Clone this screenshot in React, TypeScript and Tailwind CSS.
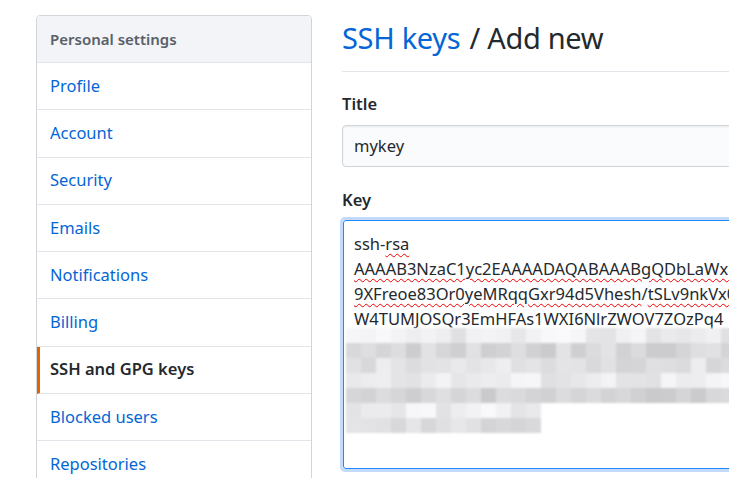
import React from "react";

const items = [
  "Profile",
  "Account",
  "Security",
  "Emails",
  "Notifications",
  "Billing",
  "SSH and GPG keys",
  "Blocked users",
  "Repositories",
];

function rand(seed: number) {
  let s = seed;
  return () => {
    s = (s * 9301 + 49297) % 233280;
    return s / 233280;
  };
}

const Blur = () => {
  const r = rand(42);
  const rows = [
    { y: 0, cols: 26, base: 236 },
    { y: 15, cols: 26, base: 215 },
    { y: 30, cols: 26, base: 225 },
    { y: 45, cols: 26, base: 236 },
    { y: 60, cols: 26, base: 212 },
    { y: 75, cols: 13, base: 238 },
    { y: 90, cols: 13, base: 222 },
  ];
  const cells: React.ReactNode[] = [];
  rows.forEach((row, ri) => {
    for (let c = 0; c < row.cols; c++) {
      const v = Math.round(row.base + (r() - 0.5) * 26);
      const g = Math.max(180, Math.min(250, v));
      cells.push(
        <div
          key={`${ri}-${c}`}
          className="absolute"
          style={{
            left: c * 15,
            top: row.y,
            width: 15,
            height: 15,
            background: `rgb(${g},${g},${g + 2})`,
          }}
        />
      );
    }
  });
  return (
    <div className="relative h-[105px] w-[400px] blur-[0.8px]">{cells}</div>
  );
};

export default function App() {
  const font = { fontFamily: '"Noto Sans", "Segoe UI", sans-serif' };
  const wavy =
    "underline decoration-wavy decoration-[#e00] decoration-1 underline-offset-[3px]";
  return (
    <div
      className="w-[729px] h-[478px] overflow-hidden bg-white text-[#24292e]"
      style={font}
    >
      <div className="flex pl-[36px] pt-[15px] gap-[30px]">
        <nav className="w-[276px] shrink-0 border border-[#d1d5da] rounded-t-[4px] h-[480px] overflow-hidden">
          <div className="h-[47px] bg-[#f3f4f7] border-b border-[#e1e4e8] flex items-center px-[13px] text-[15px] font-semibold text-[#586069]">
            Personal settings
          </div>
          {items.map((it) => {
            const active = it === "SSH and GPG keys";
            return (
              <div
                key={it}
                className={
                  active
                    ? "h-[47.25px] border-b border-[#e1e4e8] flex items-center pl-[10px] text-[16.5px] font-semibold text-[#24292e] border-l-[3px] border-l-[#e36209]"
                    : "h-[47.25px] border-b border-[#e1e4e8] flex items-center pl-[13px] text-[16.5px] text-[#0366d6]"
                }
              >
                {it}
              </div>
            );
          })}
        </nav>
        <main className="flex-1 min-w-[500px]">
          <h1 className="h-[57px] border-b border-[#e1e4e8] flex items-center text-[29px] tracking-[-0.3px] leading-none pb-[11px]">
            <span className="text-[#0366d6]">SSH keys</span>
            <span className="ml-[9px]">/ Add new</span>
          </h1>
          <div className="mt-[20px] text-[16.5px] font-semibold leading-[24px]">
            Title
          </div>
          <div className="mt-[9px] h-[42px] w-[500px] rounded-[4px] border border-[#d1d5da] bg-[#fafbfc] flex items-center px-[11px] text-[16.5px] shadow-[inset_0_1px_2px_rgba(27,31,35,0.075)]">
            mykey
          </div>
          <div className="mt-[21px] text-[16.5px] font-semibold leading-[24px]">
            Key
          </div>
          <div className="mt-[5px] ml-[-2px] w-[500px] h-[255px] rounded-[5px] border-[3px] border-[#c3dbf8]">
            <div className="h-full rounded-[3px] border border-[#2188ff] bg-white pl-[10px] pt-[10px] text-[16.5px] leading-[25px] whitespace-nowrap overflow-hidden">
              <div>
                ssh-<span className={wavy}>rsa</span>
              </div>
              <div className={wavy}>AAAAB3NzaC1yc2EAAAADAQABAAABgQDbLaWxQ7</div>
              <div>
                <span className={wavy}>9XFreoe83Or0yeMRqqGxr94d5Vhesh</span>/
                <span className={wavy}>tSLv9nkVx0Lk</span>
              </div>
              <div>W4TUMJOSQr3EmHFAs1WXI6NlrZWOV7ZOzPq4</div>
              <div className="-ml-[8px] -mt-[3px]">
                <Blur />
              </div>
            </div>
          </div>
        </main>
      </div>
    </div>
  );
}
